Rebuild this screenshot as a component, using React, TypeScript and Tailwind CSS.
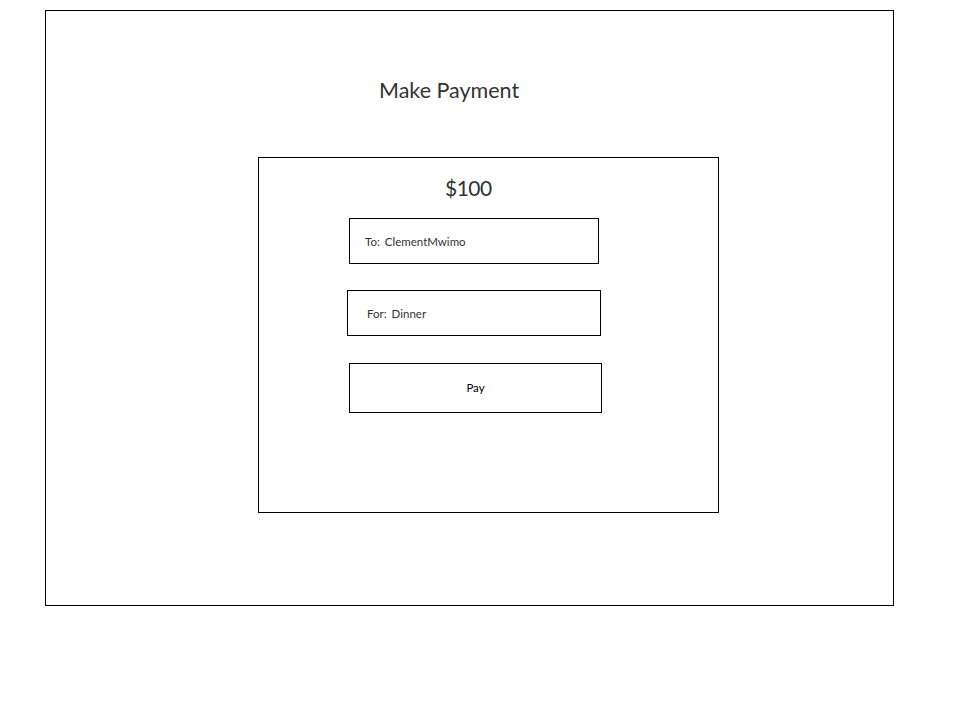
import React from 'react';

const font = { fontFamily: '"Lato", "Open Sans", sans-serif' };

function Field({ label, value, className }: { label: string; value: string; className: string }) {
  return (
    <div className={`flex h-[46px] items-center border border-black pt-[2px] text-[11.5px] text-[#333] ${className}`}>
      <span>{label}</span>
      <span className="ml-[5px]">{value}</span>
    </div>
  );
}

export default function App() {
  return (
    <div className="min-h-[715px] w-[978px] bg-white pt-[10px]" style={font}>
      <div className="ml-[45px] h-[596px] w-[849px] border border-black">
        <h1 className="ml-[333px] mt-[65px] text-[21.5px] leading-[28px] text-[#333]">Make Payment</h1>

        <div className="ml-[212px] mt-[53px] h-[356px] w-[461px] border border-black">
          <div className="ml-[186px] mt-[16px] text-[21px] leading-[28px] tracking-[-0.5px] text-[#333]">$100</div>

          <Field label="To:" value="ClementMwimo" className="ml-[90px] mt-[16px] w-[250px] pl-[15px]" />
          <Field label="For:" value="Dinner" className="ml-[88px] mt-[26px] w-[254px] pl-[19px]" />

          <button
            type="button"
            className="ml-[90px] mt-[27px] flex h-[50px] w-[253px] items-center justify-center border border-black text-[11.5px] text-black"
          >
            Pay
          </button>
        </div>
      </div>
    </div>
  );
}
